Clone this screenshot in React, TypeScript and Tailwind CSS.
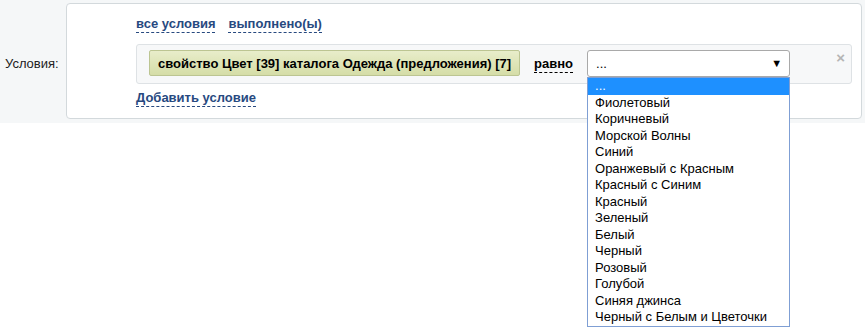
import React from "react";

const items = [
  "Фиолетовый",
  "Коричневый",
  "Морской Волны",
  "Синий",
  "Оранжевый с Красным",
  "Красный с Синим",
  "Красный",
  "Зеленый",
  "Белый",
  "Черный",
  "Розовый",
  "Голубой",
  "Синяя джинса",
  "Черный с Белым и Цветочки",
];

export default function App() {
  return (
    <div className="w-[865px] h-[328px] bg-white text-[13px] text-[#111] font-['Liberation_Sans',Arial,sans-serif] overflow-hidden">
      <div className="bg-[#f5f7f8] flex pt-[3px] pb-[4px] pr-[3px]">
        <div className="w-[66px] pl-[5px] pt-[53px] leading-[15px] text-[#222]">Условия:</div>
        <div className="flex-1 h-[116px] bg-white border border-[#d3d9dc] rounded-[4px] pl-[69px] pr-[9px] pt-[12px]">
          <div className="flex gap-[13px] h-[17px]">
            <span className="font-bold text-[#27497f] leading-[15px] border-b border-dashed border-[#27497f] pb-[1px]">все условия</span>
            <span className="font-bold text-[#27497f] leading-[15px] border-b border-dashed border-[#27497f] pb-[1px]">выполнено(ы)</span>
          </div>
          <div className="mt-[11px] h-[40px] bg-[#f7f8f9] border border-[#dee2e5] rounded-[3px] flex items-start pt-[5px] pl-[12px] relative">
            <div className="h-[26px] flex items-center px-[8px] border border-[#bcc592] rounded-[2px] bg-gradient-to-b from-[#e8edca] to-[#d5dda7] font-bold text-black leading-[15px] whitespace-nowrap">
              свойство Цвет [39] каталога Одежда (предложения) [7]
            </div>
            <div className="ml-[14px] mt-[6px] h-[17px] font-bold text-black leading-[15px] border-b border-dashed border-black">равно</div>
            <div className="ml-[14px] relative">
              <div className="w-[203px] h-[27px] bg-white border border-[#a9a9a9] rounded-[3px] flex items-center justify-between pl-[8px] pr-[7px]">
                <span className="leading-[15px] text-black">...</span>
                <span className="text-[11px] leading-[11px] text-black">▼</span>
              </div>
              <div className="absolute left-0 top-[27px] w-[203px] border border-[#7f9fd4] bg-white z-10">
                <div className="h-[16.5px] leading-[16.5px] pl-[7px] bg-[#1e90ff] text-white">...</div>
                {items.map((t) => (
                  <div key={t} className="h-[16.5px] leading-[16.5px] pl-[7px] text-black whitespace-nowrap">{t}</div>
                ))}
              </div>
            </div>
            <div className="absolute right-[6px] top-[5px] text-[15px] leading-[15px] font-bold text-[#b5b5b5]">×</div>
          </div>
          <div className="mt-[6px] flex">
            <span className="font-bold text-[#27497f] leading-[15px] border-b border-dashed border-[#27497f] pb-[1px]">Добавить условие</span>
          </div>
        </div>
      </div>
    </div>
  );
}
